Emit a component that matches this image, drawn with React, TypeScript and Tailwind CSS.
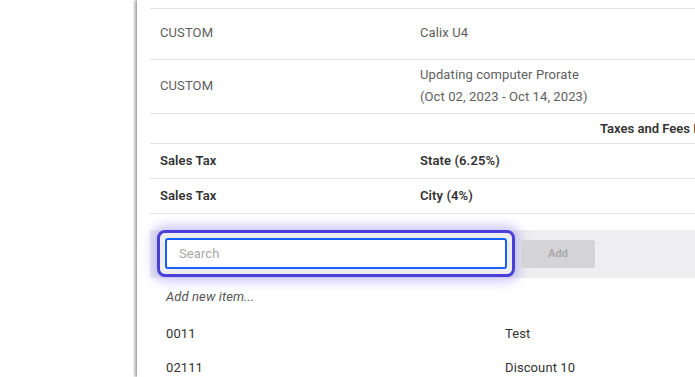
import React from "react";

export default function App() {
  const font = { fontFamily: "Roboto, 'Liberation Sans', sans-serif" };
  return (
    <div className="w-[695px] h-[377px] overflow-hidden bg-white flex" style={font}>
      <div className="w-[137px] shrink-0 bg-white" />
      <div className="flex-1 bg-white pl-[13px] overflow-hidden shadow-[-2px_0_3px_rgba(0,0,0,0.4)] relative">
        <div className="w-[900px] tracking-[0.1px]">
          <div className="h-[8px]" />
          <div className="border-t border-[#e2e2e2] h-[51px] flex items-center pb-[2px] text-[13px] text-[#5e5e5e]">
            <div className="w-[270px] pl-[10px]">CUSTOM</div>
            <div>Calix U4</div>
          </div>
          <div className="border-t border-[#e2e2e2] h-[54px] flex items-center pb-[2px] text-[13px] text-[#5e5e5e]">
            <div className="w-[270px] pl-[10px]">CUSTOM</div>
            <div className="leading-[22px]">
              <div>Updating computer Prorate</div>
              <div>(Oct 02, 2023 - Oct 14, 2023)</div>
            </div>
          </div>
          <div className="border-t border-[#e2e2e2] h-[30px] flex items-center text-[13px] font-semibold text-[#333] tracking-normal">
            <div className="pl-[450px] whitespace-nowrap">Taxes and Fees Items</div>
          </div>
          <div className="border-t border-[#e2e2e2] h-[35px] flex items-center text-[13px] font-semibold text-[#333]">
            <div className="w-[270px] pl-[10px]">Sales Tax</div>
            <div>State (6.25%)</div>
          </div>
          <div className="border-t border-b border-[#e2e2e2] h-[36px] flex items-center text-[13px] font-semibold text-[#333]">
            <div className="w-[270px] pl-[10px]">Sales Tax</div>
            <div>City (4%)</div>
          </div>
          <div className="h-[16px]" />
          <div className="bg-[#eeeef0] h-[48px] flex items-center pl-[7px]">
            <div className="border-[3px] border-[#4a3fd9] rounded-[8px] px-[5px] py-[5px] shadow-[0_0_12px_4px_rgba(99,80,240,0.35)] bg-[#eeeef0] -mt-[2px]">
              <input
                className="block w-[342px] h-[31px] border-2 border-[#1760f5] rounded-[3px] bg-white pl-[12px] text-[13px] text-[#333] placeholder-[#a8a8a8] outline-none"
                placeholder="Search"
                style={font}
              />
            </div>
            <div className="ml-[6px] w-[74px] h-[28px] bg-[#d4d4d6] rounded-[2px] flex items-center justify-center text-[11px] font-bold text-[#a9a9ab]">
              Add
            </div>
          </div>
          <div className="h-[38px] flex items-center pl-[16px] text-[13px] italic text-[#555]">
            Add new item...
          </div>
          <div className="h-[34px] flex items-center pt-[2px] pl-[16px] text-[13px] text-[#333]">
            <div className="w-[339px]">0011</div>
            <div>Test</div>
          </div>
          <div className="h-[34px] flex items-center pt-[2px] pl-[16px] text-[13px] text-[#333]">
            <div className="w-[339px]">02111</div>
            <div>Discount 10</div>
          </div>
        </div>
      </div>
    </div>
  );
}
